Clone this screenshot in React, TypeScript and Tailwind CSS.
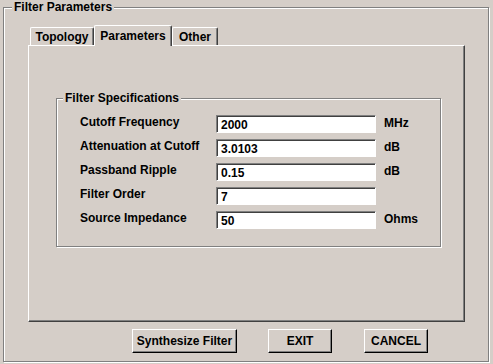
import React from "react";

const rows = [
  { label: "Cutoff Frequency", value: "2000", unit: "MHz" },
  { label: "Attenuation at Cutoff", value: "3.0103", unit: "dB" },
  { label: "Passband Ripple", value: "0.15", unit: "dB" },
  { label: "Filter Order", value: "7", unit: "" },
  { label: "Source Impedance", value: "50", unit: "Ohms" },
];

const etched =
  "border border-[#808080] shadow-[inset_1px_1px_0_#ffffff,1px_1px_0_#ffffff]";

const Tab = ({ text, active, className }: any) => (
  <div
    className={`flex items-center justify-center border-t border-l border-t-white border-l-white border-r border-r-[#404040] rounded-t-[2px] shadow-[inset_-1px_0_0_#808080] ${
      active
        ? "h-[21px] z-10 -mb-[1px] bg-[#d5cec8] pb-[1px]"
        : "h-[18px] bg-[#d5cec8] pt-[1px]"
    } ${className}`}
  >
    {text}
  </div>
);

const Button = ({ text, width }: any) => (
  <button
    className={`${width} h-[24px] flex items-center justify-center border border-t-white border-l-white border-r-black border-b-black shadow-[inset_-1px_-1px_0_#808080] bg-[#d5cec8] text-[12px] font-bold text-black`}
  >
    {text}
  </button>
);

export default function App() {
  return (
    <div
      className="w-[493px] h-[364px] bg-[#d5cec8] pt-[7px] pl-[3px] text-black overflow-hidden"
      style={{ fontFamily: '"Liberation Sans", Arial, sans-serif' }}
    >
      <div className={`relative w-[486px] h-[355px] ${etched}`}>
        <span className="absolute -top-[8px] left-[8px] px-[2px] bg-[#d5cec8] text-[12px] font-bold leading-[14px]">
          Filter Parameters
        </span>

        {/* tabs */}
        <div className="ml-[24px] mt-[17px]">
          <div className="flex items-end h-[20px] pl-[2px]">
            <Tab text="Topology" className="w-[64px] text-[12px] font-bold" />
            <Tab text="Parameters" active className="w-[78px] text-[12px] font-bold" />
            <Tab text="Other" className="w-[46px] text-[12px] font-bold" />
          </div>
          <div className="w-[437px] h-[277px] border border-t-white border-l-white border-r-[#404040] border-b-[#404040] shadow-[inset_-1px_-1px_0_#808080] pt-[52px] pl-[27px]">
            <div className={`relative w-[385px] h-[149px] ${etched} pt-[16px] pl-[23px]`}>
              <span className="absolute -top-[8px] left-[6px] px-[2px] bg-[#d5cec8] text-[12px] font-bold leading-[14px]">
                Filter Specifications
              </span>
              {rows.map((r) => (
                <div key={r.label} className="flex items-start h-[18px] mb-[6px]">
                  <div className="w-[136px] text-[12px] font-bold leading-[14px]">
                    {r.label}
                  </div>
                  <input
                    readOnly
                    value={r.value}
                    className="w-[160px] h-[18px] bg-white border border-t-[#808080] border-l-[#808080] border-r-white border-b-white shadow-[inset_1px_1px_0_#404040] pl-[4px] pt-[1px] text-[12px] font-bold outline-none"
                  />
                  <div className="ml-[8px] pt-[1px] text-[12px] font-bold leading-[14px]">
                    {r.unit}
                  </div>
                </div>
              ))}
            </div>
          </div>
        </div>

        {/* buttons */}
        <div className="flex ml-[128px] mt-[7px] gap-[31px]">
          <Button text="Synthesize Filter" width="w-[105px]" />
          <Button text="EXIT" width="w-[64px]" />
          <div className="ml-[1px]">
            <Button text="CANCEL" width="w-[64px]" />
          </div>
        </div>
      </div>
    </div>
  );
}
